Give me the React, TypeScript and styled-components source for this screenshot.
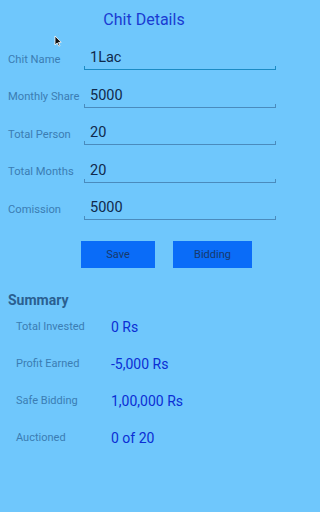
import styled, { createGlobalStyle } from "styled-components";

const GlobalStyle = createGlobalStyle`
  html, body {
    margin: 0;
    padding: 0;
    background: #6fc7fc;
  }
  * {
    box-sizing: border-box;
  }
`;

interface FieldData {
  label: string;
  value: string;
  focused?: boolean;
}

const fields: FieldData[] = [
  { label: "Chit Name", value: "1Lac", focused: true },
  { label: "Monthly Share", value: "5000" },
  { label: "Total Person", value: "20" },
  { label: "Total Months", value: "20" },
  { label: "Comission", value: "5000" },
];

const summary = [
  { label: "Total Invested", value: "0 Rs" },
  { label: "Profit Earned", value: "-5,000 Rs" },
  { label: "Safe Bidding", value: "1,00,000 Rs" },
  { label: "Auctioned", value: "0 of 20" },
];

const App = () => {
  return (
    <>
      <GlobalStyle />
      <Screen>
        <Title>Chit Details</Title>
        <Cursor width="8" height="12" viewBox="0 0 8 12">
          <path d="M1 1 L1 10 L3.2 8 L4.8 11.2 L6 10.6 L4.5 7.5 L7.2 7.3 Z" fill="#111" stroke="#fff" strokeWidth="0.8" />
        </Cursor>
        <Form>
          {fields.map((f) => (
            <FieldRow key={f.label}>
              <FieldLabel>{f.label}</FieldLabel>
              <FieldInput $focused={f.focused}>{f.value}</FieldInput>
            </FieldRow>
          ))}
        </Form>
        <Buttons>
          <ActionButton $width="74px">Save</ActionButton>
          <ActionButton $width="79px">Bidding</ActionButton>
        </Buttons>
        <SummaryTitle>Summary</SummaryTitle>
        <SummaryList>
          {summary.map((s) => (
            <SummaryRow key={s.label}>
              <SummaryLabel>{s.label}</SummaryLabel>
              <SummaryValue>{s.value}</SummaryValue>
            </SummaryRow>
          ))}
        </SummaryList>
      </Screen>
    </>
  );
};

export default App;

const Screen = styled.main`
  position: relative;
  width: 288px;
  height: 512px;
  background: #6fc7fc;
  font-family: Roboto, "Noto Sans", sans-serif;
  padding: 10px 12px 0 8px;
  overflow: hidden;
`;

const Title = styled.h1`
  margin: 0;
  text-align: center;
  font-size: 16px;
  font-weight: 400;
  color: #1a3cd2;
  line-height: 20px;
  padding-left: 4px;
`;

const Cursor = styled.svg`
  position: absolute;
  left: 54px;
  top: 35px;
`;

const Form = styled.section`
  display: flex;
  flex-direction: column;
  gap: 15.5px;
  margin-top: 18px;
`;

const FieldRow = styled.div`
  display: flex;
  align-items: center;
  height: 22px;
`;

const FieldLabel = styled.span`
  width: 76px;
  flex-shrink: 0;
  font-size: 11.2px;
  color: #3b7db3;
  white-space: nowrap;
`;

const FieldInput = styled.div<{ $focused?: boolean }>`
  position: relative;
  flex: 1;
  height: 22px;
  padding: 0 0 0 6px;
  font-size: 14.5px;
  color: #0f2a4c;
  line-height: 20px;
  border-bottom: 1px solid ${({ $focused }) => ($focused ? "#1b8bc4" : "#4a8bbd")};

  &::before,
  &::after {
    content: "";
    position: absolute;
    bottom: 0;
    width: 1px;
    height: 3px;
    background: ${({ $focused }) => ($focused ? "#1b8bc4" : "#4a8bbd")};
  }
  &::before {
    left: 0;
  }
  &::after {
    right: 0;
  }
`;

const Buttons = styled.div`
  display: flex;
  gap: 18px;
  padding-left: 73px;
  margin-top: 21px;
`;

const ActionButton = styled.button<{ $width: string }>`
  width: ${({ $width }) => $width};
  height: 27px;
  border: none;
  border-radius: 0;
  background: #0a6cf8;
  color: #17396d;
  font-family: Roboto, "Noto Sans", sans-serif;
  font-size: 11px;
  padding: 0;
`;

const SummaryTitle = styled.h2`
  margin: 23px 0 0;
  font-size: 14px;
  font-weight: 700;
  color: #2a5f90;
  line-height: 18px;
`;

const SummaryList = styled.section`
  display: flex;
  flex-direction: column;
  gap: 18px;
  padding-left: 8px;
  margin-top: 8px;
`;

const SummaryRow = styled.div`
  display: flex;
  align-items: center;
  height: 19px;
`;

const SummaryLabel = styled.span`
  width: 95px;
  font-size: 11px;
  color: #3b7db3;
`;

const SummaryValue = styled.span`
  font-size: 14px;
  color: #0b2ed4;
`;
